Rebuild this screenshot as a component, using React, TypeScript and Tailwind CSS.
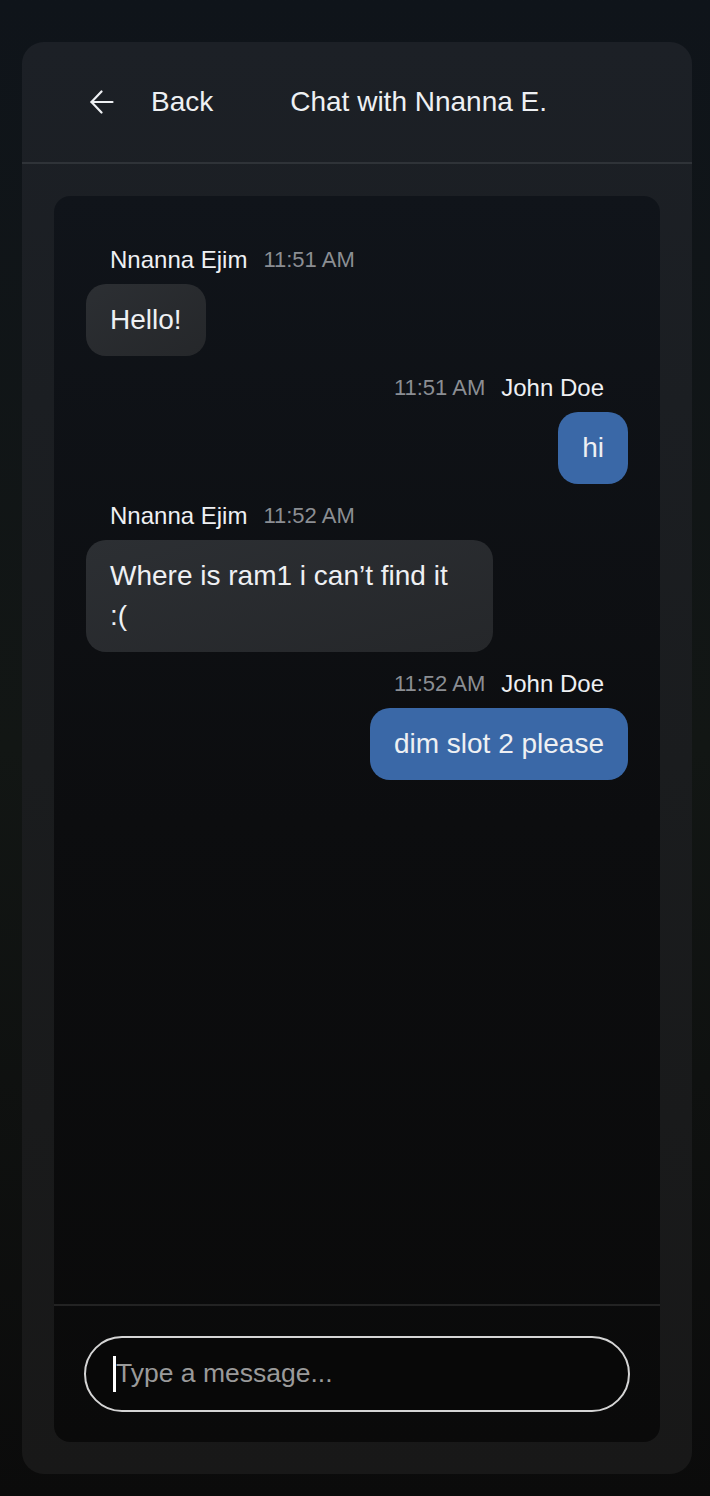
import React from "react";

const font = { fontFamily: "'Liberation Sans', Arial, sans-serif" };

type Msg = { me: boolean; name: string; time: string; text: React.ReactNode };

const msgs: Msg[] = [
  { me: false, name: "Nnanna Ejim", time: "11:51 AM", text: "Hello!" },
  { me: true, name: "John Doe", time: "11:51 AM", text: "hi" },
  {
    me: false,
    name: "Nnanna Ejim",
    time: "11:52 AM",
    text: (
      <>
        Where is ram1 i can’t find it <span className="whitespace-nowrap">:(</span>
      </>
    ),
  },
  { me: true, name: "John Doe", time: "11:52 AM", text: "dim slot 2 please" },
];

function Message({ m }: { m: Msg }) {
  return (
    <div className={m.me ? "flex flex-col items-end" : "flex flex-col items-start"}>
      <div className="flex items-center gap-4 px-6 h-7 leading-7">
        {m.me ? (
          <>
            <span className="text-[22px] text-[#8b8e93]">{m.time}</span>
            <span className="text-[24px] text-[#eef0f3]">{m.name}</span>
          </>
        ) : (
          <>
            <span className="text-[24px] text-[#eef0f3]">{m.name}</span>
            <span className="text-[22px] text-[#8b8e93]">{m.time}</span>
          </>
        )}
      </div>
      <div
        className={
          "mt-[10px] max-w-[75%] rounded-[20px] px-6 py-4 text-[28px] leading-10 text-[#eef0f3] " +
          (m.me ? "bg-[#3a68a7]" : "bg-gradient-to-br from-[#2c2f33] to-[#25272a]")
        }
      >
        {m.text}
      </div>
    </div>
  );
}

export default function App() {
  return (
    <div
      className="min-h-[1496px] w-full bg-gradient-to-b from-[#0f141a] via-[#121614] to-[#0b0b0b] pl-[22px] pt-[42px] pb-[22px]"
      style={font}
    >
      <div className="flex h-[1432px] w-[670px] flex-col rounded-[22px] bg-gradient-to-b from-[#1c2026] via-[#1a1c1e] to-[#181818]">
        <div className="flex h-[122px] shrink-0 items-center border-b-2 border-[#2f3338] pl-[68px] text-[28px] text-[#eef0f3]">
          <svg width="24" height="24" viewBox="0 0 24 24" fill="none" stroke="#eef0f3" strokeWidth="2.2" strokeLinecap="round" strokeLinejoin="round">
            <path d="M11.5 1.5 L1.5 12 L11.5 22.5" />
            <path d="M1.5 12 H22.5" />
          </svg>
          <span className="ml-[37px]">Back</span>
          <span className="ml-[77px]">Chat with Nnanna E.</span>
        </div>
        <div className="mx-8 mt-[32px] mb-8 flex flex-1 flex-col overflow-hidden rounded-[16px] bg-gradient-to-b from-[#10141a] via-[#0c0d0f] to-[#0a0a0a]">
          <div className="flex flex-1 flex-col gap-[18px] px-8 pt-[50px]">
            {msgs.map((m, i) => (
              <Message key={i} m={m} />
            ))}
          </div>
          <div className="border-t-2 border-[#232323] p-[30px]">
            <div className="flex h-[76px] items-center rounded-full border-2 border-[#d4d4d4] bg-[#080808] pl-[27px]">
              <span className="h-[36px] w-[3px] bg-white" />
              <span className="text-[26.5px] text-[#9a9a9a]">Type a message...</span>
            </div>
          </div>
        </div>
      </div>
    </div>
  );
}
